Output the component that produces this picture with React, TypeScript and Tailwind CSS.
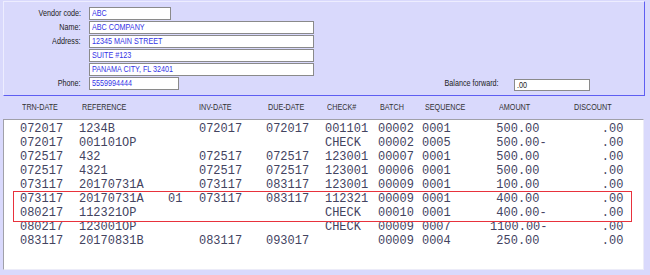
import React from 'react'

// narrow text: the screen is squeezed horizontally, so glyphs get scaled down
const sq = 'inline-block whitespace-pre origin-left scale-x-[0.8]'
const sqr = 'inline-block whitespace-pre origin-right scale-x-[0.8]'
const mono = 'inline-block whitespace-pre origin-left scale-x-[0.92]'
const monor = 'inline-block whitespace-pre origin-right scale-x-[0.92]'

type Row = {
  trn: string
  ref: string
  sub?: string
  inv?: string
  due?: string
  check?: string
  batch: string
  seq: string
  amount: string
  discount: string
}

const rows: Row[] = [
  { trn: '072017', ref: '1234B', inv: '072017', due: '072017', check: '001101', batch: '00002', seq: '0001', amount: '500.00 ', discount: '.00' },
  { trn: '072017', ref: '001101OP', check: 'CHECK', batch: '00002', seq: '0005', amount: '500.00-', discount: '.00' },
  { trn: '072517', ref: '432', inv: '072517', due: '072517', check: '123001', batch: '00007', seq: '0001', amount: '500.00 ', discount: '.00' },
  { trn: '072517', ref: '4321', inv: '072517', due: '072517', check: '123001', batch: '00006', seq: '0001', amount: '500.00 ', discount: '.00' },
  { trn: '073117', ref: '20170731A', inv: '073117', due: '083117', check: '123001', batch: '00009', seq: '0001', amount: '100.00 ', discount: '.00' },
  { trn: '073117', ref: '20170731A', sub: '01', inv: '073117', due: '083117', check: '112321', batch: '00009', seq: '0001', amount: '400.00 ', discount: '.00' },
  { trn: '080217', ref: '112321OP', check: 'CHECK', batch: '00010', seq: '0001', amount: '400.00-', discount: '.00' },
  { trn: '080217', ref: '123001OP', check: 'CHECK', batch: '00009', seq: '0007', amount: '1100.00-', discount: '.00' },
  { trn: '083117', ref: '20170831B', inv: '083117', due: '093017', batch: '00009', seq: '0004', amount: '250.00 ', discount: '.00' },
]

function Field({ label, value, width }: { label?: string; value: string; width: string }) {
  return (
    <div className="flex items-center h-[13px] gap-[8px]">
      <div className="w-[77px] text-right text-[9px] leading-[13px] text-[#222]">
        {label && <span className={sqr}>{label}</span>}
      </div>
      <div className={`${width} h-[13px] bg-white border border-[#8a8a8a] pl-[2px] text-[9px] leading-[11px] text-[#3434e6]`}>
        <span className={sq}>{value}</span>
      </div>
    </div>
  )
}

function Head({ w, text }: { w: string; text: string }) {
  return (
    <div className={`${w} shrink-0`}>
      <span className={sq}>{text}</span>
    </div>
  )
}

function Cell({ w, text, right }: { w: string; text?: string; right?: boolean }) {
  return (
    <div className={`${w} shrink-0 ${right ? 'text-right' : ''}`}>
      {text && <span className={right ? monor : mono}>{text}</span>}
    </div>
  )
}

export default function App() {
  return (
    <div className="w-[650px] h-[275px] overflow-hidden bg-[#d9d9fc] font-['Liberation_Sans',Arial,sans-serif]">
      <div className="pt-px pl-[3px] pr-[5px]">
        <div className="h-[95px] border border-t-[#ededff] border-l-[#ededff] border-r-[#5e5ef2] border-b-[#5e5ef2] pt-[5px] flex flex-col gap-px">
          <Field label="Vendor code:" value="ABC" width="w-[82px]" />
          <Field label="Name:" value="ABC COMPANY" width="w-[225px]" />
          <Field label="Address:" value="12345 MAIN STREET" width="w-[225px]" />
          <Field value="SUITE #123" width="w-[225px]" />
          <Field value="PANAMA CITY, FL 32401" width="w-[225px]" />
          <div className="flex items-center h-[13px]">
            <Field label="Phone:" value="5559994444" width="w-[90px]" />
            <div className="w-[320px] text-right text-[9px] leading-[13px] text-[#222]">
              <span className={sqr}>Balance forward:</span>
            </div>
            <div className="ml-[15px] w-[76px] h-[12px] mt-[2px] bg-white border border-[#8a8a8a] pl-[2px] text-[9px] leading-[10px] text-[#222]">
              <span className={sq}>.00</span>
            </div>
          </div>
        </div>
      </div>

      <div className="flex items-center h-[23px] pl-[22px] text-[9px] text-[#333]">
        <Head w="w-[60px]" text="TRN-DATE" />
        <Head w="w-[117px]" text="REFERENCE" />
        <Head w="w-[69px]" text="INV-DATE" />
        <Head w="w-[59px]" text="DUE-DATE" />
        <Head w="w-[53px]" text="CHECK#" />
        <Head w="w-[45px]" text="BATCH" />
        <Head w="w-[74px]" text="SEQUENCE" />
        <Head w="w-[75px]" text="AMOUNT" />
        <Head w="w-[60px]" text="DISCOUNT" />
      </div>

      <div className="relative ml-[3px] w-[641px] h-[151px] bg-white border border-t-[#a0a0a8] border-l-[#a0a0a8] border-r-[#ececf8] border-b-[#ececf8] pt-[2px] pl-[16px] font-['Liberation_Mono',monospace] text-[13px] leading-[14px] text-[#43435f]">
        {rows.map((r, i) => (
          <div key={i} className="flex h-[14px]">
            <Cell w="w-[59px]" text={r.trn} />
            <Cell w="w-[89px]" text={r.ref} />
            <Cell w="w-[31px]" text={r.sub} />
            <Cell w="w-[67px]" text={r.inv} />
            <Cell w="w-[59px]" text={r.due} />
            <Cell w="w-[53px]" text={r.check} />
            <Cell w="w-[44px]" text={r.batch} />
            <Cell w="w-[58px]" text={r.seq} />
            <Cell w="w-[67px]" text={r.amount} right />
            <Cell w="w-[76px]" text={r.discount} right />
          </div>
        ))}
        <div className="absolute top-[71px] left-[9px] w-[619px] h-[31px] ring-1 ring-inset ring-[#e8323c] text-[#e8323c]" />
      </div>
    </div>
  )
}
